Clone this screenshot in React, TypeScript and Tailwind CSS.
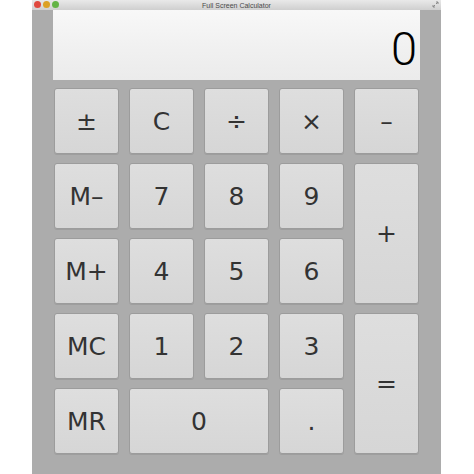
import React from "react";

const Btn = ({ label, className = "", textClass = "" }: { label: string; className?: string; textClass?: string }) => (
  <div
    className={
      "flex items-center justify-center rounded-[3px] border border-[#9c9c9c] bg-gradient-to-b from-[#dedede] to-[#d6d6d6] text-[#333333] shadow-[0_1px_0_rgba(0,0,0,0.08)] " +
      className
    }
  >
    <span className={"text-[25px] leading-none " + textClass}>{label}</span>
  </div>
);

export default function App() {
  return (
    <div className="h-[474px] w-[474px] bg-white" style={{ fontFamily: '"DejaVu Sans", "Liberation Sans", sans-serif' }}>
      <div className="ml-[32px] flex h-[474px] w-[409px] flex-col bg-[#acacac]">
        <div className="relative flex h-[10px] items-center justify-center bg-gradient-to-b from-[#e9e9e9] to-[#cfcfcf]">
          <div className="absolute left-[2px] top-[1px] flex gap-[2px]">
            <div className="h-[7px] w-[7px] rounded-full bg-[#e0493f]" />
            <div className="h-[7px] w-[7px] rounded-full bg-[#dca125]" />
            <div className="h-[7px] w-[7px] rounded-full bg-[#64b446]" />
          </div>
          <span className="text-[7px] leading-none text-[#4a4a4a]" style={{ fontFamily: '"Liberation Sans", sans-serif' }}>
            Full Screen Calculator
          </span>
          <svg className="absolute right-[2px] top-[1px]" width="7" height="7" viewBox="0 0 7 7">
            <path d="M4 1 L6 1 L6 3 M3 4 L1 6 M1 4 L1 6 L3 6 M6 1 L4 3" stroke="#8a8a8a" strokeWidth="1" fill="none" />
          </svg>
        </div>
        <div className="flex flex-col px-[21px] pb-[14px]">
          <div className="flex h-[70px] items-center justify-end bg-gradient-to-b from-[#f8f8f8] via-[#f1f1f1] to-[#ebebeb] pr-[3px] pt-[6px]">
            <span
              className="text-[47px] font-light leading-none text-black"
              style={{ fontFamily: 'Roboto, "Liberation Sans", sans-serif' }}
            >
              0
            </span>
          </div>
          <div className="mt-[8px] grid grid-cols-[repeat(5,65px)] grid-rows-[repeat(5,66px)] gap-x-[10px] gap-y-[9px] pl-px">
            <Btn label="±" />
            <Btn label="C" />
            <Btn label="÷" />
            <Btn label="×" />
            <Btn label="–" />
            <Btn label="M–" />
            <Btn label="7" />
            <Btn label="8" />
            <Btn label="9" />
            <Btn label="+" className="row-span-2" />
            <Btn label="M+" />
            <Btn label="4" />
            <Btn label="5" />
            <Btn label="6" />
            <Btn label="MC" />
            <Btn label="1" />
            <Btn label="2" />
            <Btn label="3" />
            <Btn label="=" className="row-span-2" />
            <Btn label="MR" />
            <Btn label="0" className="col-span-2" />
            <Btn label="." />
          </div>
        </div>
      </div>
    </div>
  );
}
